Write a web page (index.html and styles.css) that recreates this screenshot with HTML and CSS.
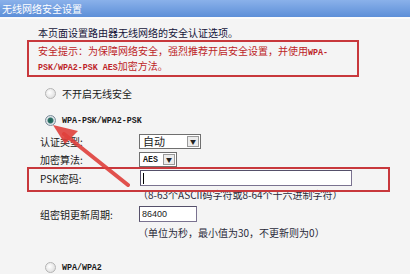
FILE: index.html
```html
<!DOCTYPE html>
<html lang="zh-CN">
<head>
    <meta charset="UTF-8">
    <title>无线网络安全设置</title>
    <link rel="stylesheet" href="styles.css">
</head>
<body>
    <div class="title">无线网络安全设置</div>
    <div class="main">
        <p class="intro">本页面设置路由器无线网络的安全认证选项。</p>
        <div class="tip">
            安全提示：为保障网络安全，强烈推荐开启安全设置，并使用<span class="latin">WPA-</span><br>
            <span class="latin">PSK/WPA2-PSK AES</span>加密方法。
        </div>

        <div class="radio-row first">
            <span class="radio"></span>
            <span>不开启无线安全</span>
        </div>
        <div class="radio-row second">
            <span class="radio checked"></span>
            <span class="latin">WPA-PSK/WPA2-PSK</span>
        </div>

        <div class="row">
            <span class="label">认证类型:</span>
            <span class="select wide"><span class="select-text">自动</span><span class="select-btn">&#9660;</span></span>
        </div>
        <div class="row">
            <span class="label">加密算法:</span>
            <span class="select narrow"><span class="select-text latin">AES</span><span class="select-btn">&#9660;</span></span>
        </div>
        <div class="psk-box">
            <div class="row inner">
                <span class="label">PSK密码:</span>
                <span class="input psk"><span class="caret"></span></span>
            </div>
        </div>
        <div class="help first-help">（8-63个ASCII码字符或8-64个十六进制字符）</div>

        <div class="row group">
            <span class="label">组密钥更新周期:</span>
            <span class="input period">86400</span>
        </div>
        <div class="help">（单位为秒，最小值为30，不更新则为0）</div>

        <div class="radio-row third">
            <span class="radio"></span>
            <span class="latin">WPA/WPA2</span>
        </div>
    </div>

    <svg class="arrow" width="410" height="274" viewBox="0 0 410 274">
        <line x1="128" y1="185" x2="64" y2="134" stroke="#e0403c" stroke-width="4" stroke-linecap="round" opacity="0.9"/>
        <polygon points="53,125 78,131 65,144" fill="#e0403c" opacity="0.9"/>
    </svg>
</body>
</html>
```

FILE: styles.css
```css
body {
    margin: 0;
    padding: 0;
    width: 410px;
    height: 274px;
    overflow: hidden;
    background-color: #f4f4f4;
    font-family: "Noto Sans CJK SC", "Liberation Sans", sans-serif;
    font-size: 10px;
    color: #1a1a1a;
}

.title {
    height: 17px;
    line-height: 17px;
    padding-left: 2px;
    color: #fff;
    font-size: 10px;
    background: linear-gradient(#8ab1ea, #5d8fd8);
    border-bottom: 2px solid #fbfbfb;
}

.main {
    padding-left: 27px;
    padding-top: 8px;
}

.intro {
    margin: 0 0 0 11px;
    height: 12px;
    line-height: 12px;
    color: #14143a;
}

.latin {
    font-family: "Liberation Mono", monospace;
    font-size: 8.3px;
    font-weight: bold;
}

.tip {
    box-sizing: border-box;
    margin-top: 1px;
    width: 332px;
    height: 37px;
    padding: 2px 9px;
    line-height: 13px;
    border: 2px solid #c8383c;
    color: #bd1f28;
}

.radio-row {
    display: flex;
    align-items: center;
    gap: 6px;
    height: 16px;
    padding-left: 18px;
}

.radio-row.first {
    margin-top: 8px;
}

.radio-row.second {
    margin-top: 11px;
}

.radio-row.third {
    margin-top: 20px;
}

.radio {
    box-sizing: border-box;
    width: 11px;
    height: 11px;
    border-radius: 50%;
    border: 1px solid #b4b4b4;
    background: radial-gradient(circle at 40% 40%, #ffffff, #d6d6d6);
}

.radio.checked {
    border-color: #7b8c9a;
    background: radial-gradient(circle, #1d5a52 0, #2c7166 2.5px, #dfe6ea 3.5px, #c6ced4 100%);
}

.row {
    display: flex;
    align-items: center;
    height: 18px;
    padding-left: 13px;
}

.radio-row.second + .row {
    margin-top: 4px;
}

.label {
    width: 99px;
    flex-shrink: 0;
}

.select {
    box-sizing: border-box;
    display: flex;
    height: 15px;
    background: #fff;
    border: 1px solid #6f6f6f;
}

.select.wide {
    width: 62px;
}

.select.narrow {
    width: 38px;
}

.select-text {
    flex: 1;
    padding-left: 3px;
    line-height: 13px;
    font-size: 11px;
}

.select-text.latin {
    font-size: 8.3px;
}

.select-btn {
    box-sizing: border-box;
    width: 12px;
    margin: 1px;
    border: 1px solid #9a9a9a;
    background: #ececec;
    font-size: 6px;
    line-height: 10px;
    text-align: center;
    color: #222;
}

.psk-box {
    position: relative;
    z-index: 1;
    box-sizing: border-box;
    width: 363px;
    height: 25px;
    margin-top: -1px;
    border: 2px solid #c8383c;
}

.row.inner {
    height: 16px;
    padding-left: 11px;
    padding-top: 1px;
}

.input {
    box-sizing: border-box;
    height: 16px;
    background: #fff;
    border: 1px solid #7a7290;
    border-top-color: #55506a;
    border-left-color: #55506a;
    display: flex;
    align-items: center;
}

.input.psk {
    width: 212px;
    margin-left: 1px;
}

.caret {
    width: 1px;
    height: 11px;
    margin-left: 2px;
    background: #000;
}

.input.period {
    width: 58px;
    padding-left: 2px;
    font-family: "Liberation Sans", sans-serif;
    font-size: 9px;
}

.help {
    margin-left: 111px;
    margin-top: 4px;
    height: 12px;
    line-height: 12px;
    color: #2a2a3a;
}

.help.first-help {
    margin-top: -3px;
}

.row.group {
    margin-top: 4px;
}

.arrow {
    position: absolute;
    left: 0;
    top: 0;
    z-index: 2;
    pointer-events: none;
}
```
